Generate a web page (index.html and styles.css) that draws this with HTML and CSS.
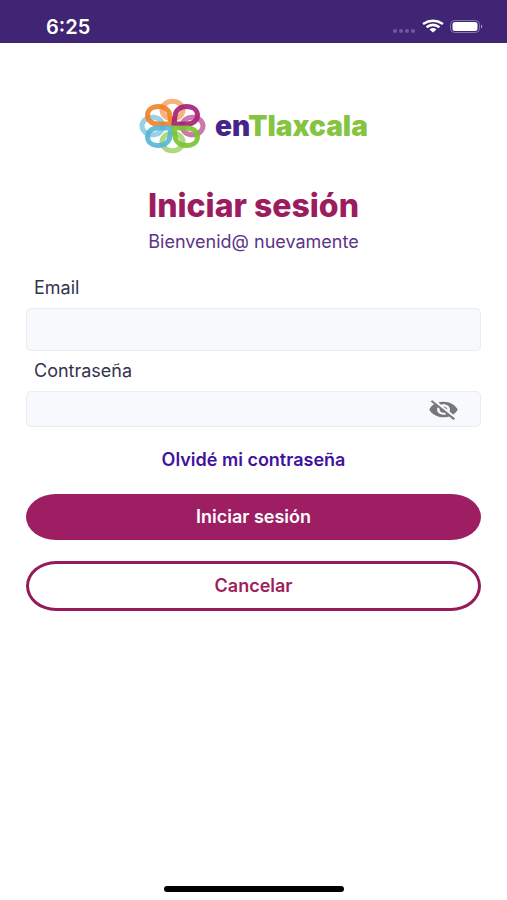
FILE: index.html
```html
<!DOCTYPE html>
<html lang="es">
<head>
<meta charset="utf-8">
<meta name="viewport" content="width=device-width, initial-scale=1">
<title>Iniciar sesión</title>
<link rel="stylesheet" href="styles.css">
</head>
<body>
<header class="status">
  <span class="time">6:25</span>
  <svg class="status-icons" width="92" height="16" viewBox="0 0 92 16" aria-hidden="true">
    <g fill="#6f5aa0"><circle cx="4" cy="12" r="2"/><circle cx="10" cy="12" r="2"/><circle cx="16" cy="12" r="2"/><circle cx="22" cy="12" r="2"/></g>
    <g fill="none" stroke="#fff" stroke-width="2.500"><path d="M32 5Q42-1.500 52 5"/><path d="M35.500 8.300Q42 3.500 48.500 8.300"/></g>
    <path d="M38.500 10.500Q42 7.700 45.500 10.500L42 13.500Z" fill="#fff"/>
    <rect x="59.500" y="1.500" width="29" height="12" rx="4" fill="none" stroke="#8572b3"/>
    <rect x="61.500" y="3" width="25" height="9" rx="2.500" fill="#fff"/>
    <path d="M90 5.500Q92.500 7.500 90 9.500Z" fill="#a597c8"/>
  </svg>
</header>
<main class="content">
  <div class="logo">
    <svg class="flower" width="68" height="56" viewBox="0 0 68 56" aria-hidden="true">
      <g fill="none" stroke-width="5">
        <g stroke-opacity=".65">
          <ellipse cx="33.500" cy="12" rx="10.500" ry="8.800" stroke="#ef8a3c"/>
          <ellipse cx="13.500" cy="28" rx="10.500" ry="8.800" stroke="#62b8d6"/>
          <ellipse cx="53.500" cy="28" rx="10.500" ry="8.800" stroke="#b03080"/>
          <ellipse cx="33.500" cy="44" rx="10.500" ry="8.800" stroke="#83c440"/>
        </g>
        <g stroke-opacity=".9">
          <path d="M32 26H19C12.500 26 8.500 22 8.500 17.300C8.500 12 13 8.500 19.500 8.500C26 8.500 30.500 12.500 31 18Z" stroke="#f08025"/>
          <path d="M35 26H48C54.500 26 58.500 22 58.500 17.300C58.500 12 54 8.500 47.500 8.500C41 8.500 36.500 12.500 36 18Z" stroke="#a51d72"/>
          <path d="M32 30H19C12.500 30 8.500 34 8.500 38.700C8.500 44 13 47.500 19.500 47.500C26 47.500 30.500 43.500 31 38Z" stroke="#55b5d5"/>
          <path d="M35 30H48C54.500 30 58.500 34 58.500 38.700C58.500 44 54 47.500 47.500 47.500C41 47.500 36.500 43.500 36 38Z" stroke="#7ac32f"/>
        </g>
      </g>
    </svg>
    <span class="brand"><span class="brand-en">en</span>Tlaxcala</span>
  </div>
  <h1 class="title">Iniciar sesión</h1>
  <p class="subtitle">Bienvenid@ nuevamente</p>
  <form class="form">
    <label class="label" for="email">Email</label>
    <input class="input input-email" id="email" type="email">
    <label class="label" for="password">Contraseña</label>
    <div class="password">
      <input class="input input-password" id="password" type="password">
      <button class="toggle" type="button" aria-label="Mostrar contraseña">
        <svg width="31" height="25" viewBox="0 0 24 24" preserveAspectRatio="none" fill="#777" aria-hidden="true"><path d="M12 7c2.760 0 5 2.240 5 5 0 .65-.13 1.260-.36 1.830l2.920 2.920c1.510-1.260 2.700-2.890 3.430-4.750-1.730-4.390-6-7.500-11-7.500-1.400 0-2.740.25-3.980.7l2.160 2.160C10.740 7.130 11.350 7 12 7zM2 4.270l2.280 2.280.46.46C3.080 8.300 1.780 10.020 1 12c1.730 4.390 6 7.500 11 7.500 1.550 0 3.030-.3 4.380-.84l.42.42L19.730 22 21 20.730 3.270 3 2 4.270zM7.530 9.800l1.550 1.550c-.05.21-.08.43-.08.65 0 1.660 1.340 3 3 3 .22 0 .44-.03.65-.08l1.550 1.550c-.67.33-1.410.53-2.200.53-2.760 0-5-2.240-5-5 0-.79.2-1.530.53-2.200zm4.310-.78l3.150 3.150.02-.16c0-1.660-1.340-3-3-3l-.17.01z"/></svg>
      </button>
    </div>
    <a class="forgot" href="#">Olvidé mi contraseña</a>
    <button class="btn btn-primary" type="submit">Iniciar sesión</button>
    <button class="btn btn-outline" type="button">Cancelar</button>
  </form>
</main>
<footer class="home"><div class="home-bar"></div></footer>
</body>
</html>
```
FILE: styles.css
```css
* {
  box-sizing: border-box;
}

body {
  margin: 0;
  min-height: 100vh;
  display: flex;
  flex-direction: column;
  background: #fff;
  color: #33334d;
  font-family: Inter, "Liberation Sans", sans-serif;
  font-size: 18px;
  line-height: 24px;
}

.status {
  display: flex;
  justify-content: space-between;
  align-items: flex-end;
  height: 43px;
  padding: 0 24px 4px 46px;
  background: #3f2573;
  color: #fff;
}

.time {
  font-size: 20px;
  font-weight: 600;
}

.status-icons {
  margin-bottom: 4px;
}

.content {
  flex: 1;
  padding: 55px 26px 0;
}

.logo {
  display: flex;
  justify-content: center;
  align-items: center;
  gap: 8px;
}

.brand {
  color: #84c441;
  font-size: 28px;
  font-weight: 900;
  line-height: 32px;
}

.brand-en {
  color: #46248c;
}

.title {
  margin: 32px 0 0;
  color: #9d1c60;
  font-size: 32px;
  font-weight: 800;
  line-height: 40px;
  text-align: center;
}

.subtitle {
  margin: 4px 0 0;
  color: #5b3489;
  text-align: center;
}

.form {
  display: flex;
  flex-direction: column;
  margin-top: 22px;
}

.label {
  padding-left: 8px;
}

.input {
  width: 100%;
  padding: 0 12px;
  border: 1px solid #e7eeee;
  border-radius: 5px;
  background: #f7f9fd;
  color: inherit;
  font: inherit;
}

.input-email {
  height: 43px;
  margin: 8px 0;
}

.password {
  position: relative;
  margin-top: 8px;
}

.input-password {
  display: block;
  height: 36px;
  padding-right: 64px;
}

.toggle {
  position: absolute;
  top: 0;
  bottom: 0;
  right: 22px;
  display: flex;
  align-items: center;
  padding: 0;
  border: 0;
  background: none;
}

.forgot {
  align-self: center;
  margin: 21px 0 22px;
  color: #4310a0;
  font-weight: 600;
  text-decoration: none;
}

.btn {
  padding: 10px 28px;
  border: 0;
  border-radius: 30px / 50%;
  font: inherit;
  font-weight: 600;
}

.btn-primary {
  min-height: 46px;
  background: #9d1e62;
  color: #fff;
}

.btn-outline {
  min-height: 50px;
  margin-top: 21px;
  border: 3px solid #961a59;
  background: #fff;
  color: #9d1e5c;
}

.home {
  display: flex;
  justify-content: center;
  padding: 12px 0 8px;
}

.home-bar {
  width: 180px;
  height: 6px;
  border-radius: 3px;
  background: #000;
}
```
